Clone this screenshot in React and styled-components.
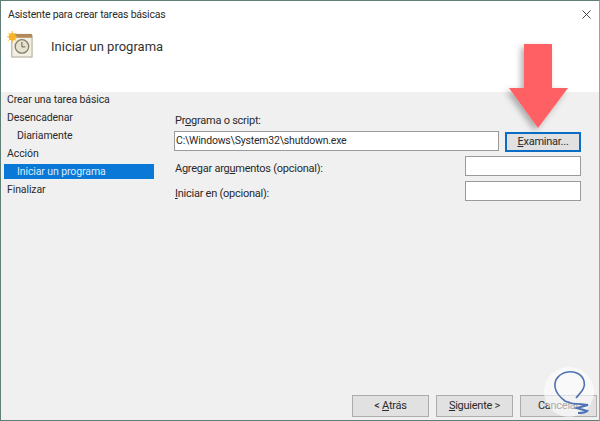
import styled, { createGlobalStyle } from "styled-components";

const GlobalStyle = createGlobalStyle`
	html, body {
		margin: 0;
		padding: 0;
		background: #ffffff;
	}
	* {
		box-sizing: border-box;
	}
`;

const Window = styled.div`
	position: relative;
	width: 600px;
	height: 421px;
	display: flex;
	flex-direction: column;
	overflow: hidden;
	border: 1px solid #5f7f76;
	border-right-color: #8fa8a0;
	font-family: "Roboto", "Noto Sans", sans-serif;
	font-size: 11px;
	letter-spacing: -0.25px;
	color: #2a2a2a;
`;

const Header = styled.div`
	height: 91px;
	flex: none;
	background: #ffffff;
	padding: 6px 7px 0;
`;

const TitleRow = styled.div`
	display: flex;
	justify-content: space-between;
	align-items: flex-start;
	height: 15px;
	line-height: 15px;
	font-size: 10.5px;
	letter-spacing: -0.2px;
`;

const CloseButton = styled.svg`
	width: 9px;
	height: 9px;
	margin-right: 1px;
	margin-top: 3px;
`;

const Heading = styled.div`
	display: flex;
	align-items: center;
	gap: 17px;
	margin-top: 9px;
	font-size: 13px;
	letter-spacing: 0;
	color: #333333;

	span {
		padding-top: 4px;
	}
`;

const Body = styled.div`
	flex: 1;
	display: flex;
	background: #f0f0f0;
`;

const Sidebar = styled.div`
	width: 153px;
	flex: none;
	display: flex;
	flex-direction: column;
	padding-left: 3px;
	font-size: 10.5px;
	letter-spacing: -0.1px;
`;

const SideItem = styled.div`
	height: 18px;
	line-height: 16px;
	padding-left: ${(p) => (p.$sub ? "13px" : "3px")};
`;

const ActiveItem = styled(SideItem)`
	height: 15px;
	margin-bottom: 3px;
	background: #0a78d7;
	color: #d9ecfb;
`;

const Form = styled.div`
	flex: 1;
	padding: 20px 18px 0 20px;
	display: flex;
	flex-direction: column;
`;

const FieldLabel = styled.div`
	height: 15px;
	line-height: 17px;
	margin-bottom: 4px;
	padding-left: 1px;
`;

const ScriptRow = styled.div`
	display: flex;
	gap: 6px;
	height: 20px;
	margin-bottom: 5px;
`;

const TextBox = styled.div`
	width: ${(p) => p.$width};
	height: 20px;
	background: #ffffff;
	border: 1px solid #9a9a9a;
	line-height: 18px;
	padding-left: 1px;
	flex: none;
	font-size: 10.5px;
	letter-spacing: -0.2px;
`;

const BrowseButton = styled.div`
	width: 76px;
	height: 20px;
	margin-top: 1px;
	background: #e1e1e1;
	border: 2px solid #0a6cc4;
	text-align: center;
	line-height: 16px;
`;

const OptionRow = styled.div`
	display: flex;
	justify-content: space-between;
	align-items: center;
	height: 20px;
	margin-bottom: 5px;
	padding-left: 1px;
`;

const OptionLabel = styled.span`
	padding-top: 4px;
`;

const Footer = styled.div`
	position: absolute;
	left: 351px;
	bottom: 3px;
	display: flex;
	gap: 7px;
`;

const FooterButton = styled.div`
	width: 77px;
	height: 22px;
	background: #e1e1e1;
	border: 1px solid #acacac;
	text-align: center;
	line-height: 20px;
`;

const Arrow = styled.svg`
	position: absolute;
	left: 500px;
	top: 37px;
	width: 80px;
	height: 100px;
`;

const Watermark = styled.svg`
	position: absolute;
	left: 542px;
	top: 362px;
	width: 52px;
	height: 56px;
`;

const ClockIcon = () => (
	<svg width="27" height="27" viewBox="0 0 28 28" style={{ marginLeft: -1, flex: "none" }}>
		<rect x="5" y="5" width="21" height="22" fill="#f3efe2" stroke="#a9a394" />
		<rect x="5" y="3" width="21" height="4" fill="#b3895b" />
		<circle cx="15.5" cy="16" r="7" fill="#e6e2cf" stroke="#85806c" strokeWidth="1.4" />
		<path d="M15.5 11.5V16.5H19" fill="none" stroke="#5f5a4a" strokeWidth="1" />
		<circle cx="5.5" cy="6" r="3.8" fill="#f7b526" />
		<path d="M5.5 0V12M0 6H11M1.5 2L9.5 10M9.5 2L1.5 10" stroke="#f7b526" strokeWidth="1" />
	</svg>
);

const App = () => {
	return (
		<>
			<GlobalStyle />
			<Window>
				<Header>
					<TitleRow>
						<span>Asistente para crear tareas básicas</span>
						<CloseButton viewBox="0 0 10 10">
							<path d="M0.5 0.5L9.5 9.5M9.5 0.5L0.5 9.5" stroke="#333333" strokeWidth="1" />
						</CloseButton>
					</TitleRow>
					<Heading>
						<ClockIcon />
						<span>Iniciar un programa</span>
					</Heading>
				</Header>
				<Body>
					<Sidebar>
						<SideItem>Crear una tarea básica</SideItem>
						<SideItem>Desencadenar</SideItem>
						<SideItem $sub>Diariamente</SideItem>
						<SideItem>Acción</SideItem>
						<ActiveItem $sub>Iniciar un programa</ActiveItem>
						<SideItem>Finalizar</SideItem>
					</Sidebar>
					<Form>
						<FieldLabel>
							Pr<u>o</u>grama o script:
						</FieldLabel>
						<ScriptRow>
							<TextBox $width="325px">C:\Windows\System32\shutdown.exe</TextBox>
							<BrowseButton>
								<u>E</u>xaminar...
							</BrowseButton>
						</ScriptRow>
						<OptionRow>
							<OptionLabel>
								Agregar arg<u>u</u>mentos (opcional):
							</OptionLabel>
							<TextBox $width="116px" />
						</OptionRow>
						<OptionRow>
							<OptionLabel>
								<u>I</u>niciar en (opcional):
							</OptionLabel>
							<TextBox $width="116px" />
						</OptionRow>
					</Form>
				</Body>
				<Footer>
					<FooterButton>
						&lt; <u>A</u>trás
					</FooterButton>
					<FooterButton>
						<u>S</u>iguiente &gt;
					</FooterButton>
					<FooterButton>Cancelar</FooterButton>
				</Footer>
				<Arrow viewBox="0 0 80 100">
					<defs>
						<filter id="arrowShadow" x="-30%" y="-30%" width="160%" height="160%">
							<feDropShadow dx="-3" dy="3" stdDeviation="3" floodColor="#000000" floodOpacity="0.3" />
						</filter>
					</defs>
					<path d="M23 6H51V50H67L37 90L8 50H23Z" fill="#ff6064" filter="url(#arrowShadow)" />
				</Arrow>
				<Watermark viewBox="0 0 52 56">
					<circle cx="26" cy="29" r="25" fill="#ffffff" fillOpacity="0.6" />
					<path
						d="M33 35C38 29 43 25 41 18C39 11 32 8 25 9C17 10 11 16 12 24C13 31 18 35 22 38C26 40 30 41 36 41"
						fill="none"
						stroke="#4f72b3"
						strokeWidth="1.6"
					/>
					<path d="M36 41L45 42L34 45L44 48C42 50 38 50 35 50" fill="none" stroke="#4f72b3" strokeWidth="2.2" />
				</Watermark>
			</Window>
		</>
	);
};

export default App;
